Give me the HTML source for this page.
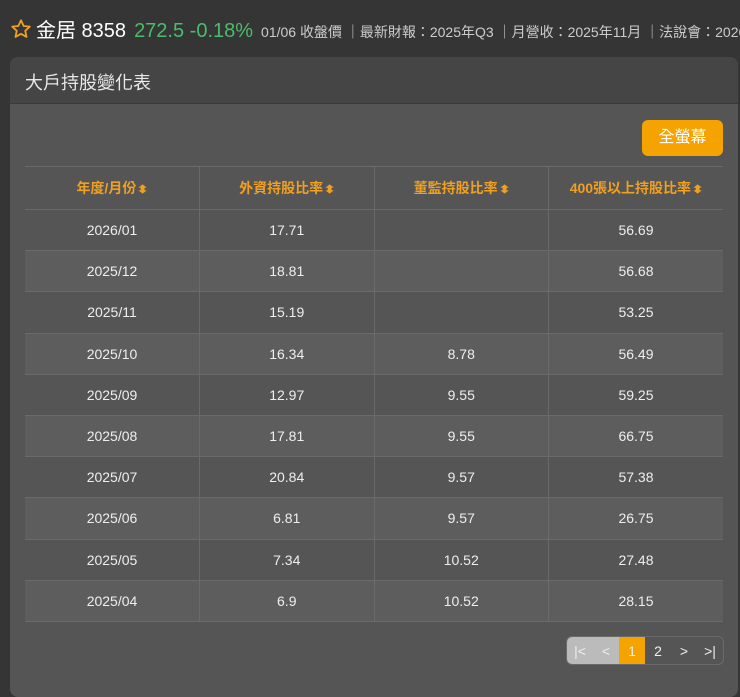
<!DOCTYPE html>
<html><head><meta charset="utf-8"><style>
*{margin:0;padding:0;box-sizing:border-box}
body{width:740px;height:672px;background:#353535;font-family:"Liberation Sans","Noto Sans CJK TC",sans-serif;overflow:hidden;position:relative;color:#eee}
.top{position:absolute;left:10px;top:14px;white-space:nowrap;display:flex;align-items:baseline}
.card{position:absolute;left:10px;top:57px;width:728px;height:640px;border-radius:8px;background:#555;overflow:hidden}
.ch{height:47px;background:#454545;border-bottom:1px solid #3a3a3a;padding:12px 15px;font-size:18px;color:#e8e8e8}
.btn{position:absolute;left:632px;top:63px;width:81px;height:36px;background:#f5a300;border-radius:6px;color:#fff;font-size:16px;text-align:center;line-height:36px}
table{position:absolute;left:15px;top:109px;width:698px;border-collapse:collapse;table-layout:fixed}
td,th{border:1px solid #6a6a6a;text-align:center;font-size:14px;height:41.2px}
tr td:first-child,tr th:first-child{border-left:none}
tr td:last-child,tr th:last-child{border-right:none}
th{height:43px;color:#f0a020;font-weight:bold;font-size:14px}
td{color:#eee}
tr:nth-child(odd) td{background:#5d5d5d}
.s{font-size:11px;margin-left:2px;display:inline-block;transform:scaleX(1.3)}
.pg{position:absolute;left:556px;top:579px;height:29px;display:flex;border:1px solid #6a6a6a;border-radius:6px;overflow:hidden;font-size:14px}
.pg div{width:26px;text-align:center;line-height:28px;color:#eee}
</style></head><body>
<div class="top"><svg width="22" height="22" viewBox="0 0 24 24" style="align-self:center;margin-right:4px"><path d="M12 2.5l2.9 6.2 6.7.7-5 4.6 1.4 6.7L12 17.3 6 20.7l1.4-6.7-5-4.6 6.7-.7z" fill="none" stroke="#f0a020" stroke-width="2" stroke-linejoin="round"/></svg><span style="font-size:20px;color:#fff">金居 8358</span><span style="font-size:20px;color:#4cbb6c;margin-left:8px">272.5 -0.18%</span><span style="font-size:14px;color:#ccc;margin-left:8px">01/06 收盤價 ｜最新財報：2025年Q3 ｜月營收：2025年11月 ｜法說會：2026</span></div>
<div class="card"><div class="ch">大戶持股變化表</div>
<div class="btn">全螢幕</div>
<table>
<tr><th>年度/月份<span class="s">⬍</span></th><th>外資持股比率<span class="s">⬍</span></th><th>董監持股比率<span class="s">⬍</span></th><th>400張以上持股比率<span class="s">⬍</span></th></tr>
<tr><td>2026/01</td><td>17.71</td><td></td><td>56.69</td></tr>
<tr><td>2025/12</td><td>18.81</td><td></td><td>56.68</td></tr>
<tr><td>2025/11</td><td>15.19</td><td></td><td>53.25</td></tr>
<tr><td>2025/10</td><td>16.34</td><td>8.78</td><td>56.49</td></tr>
<tr><td>2025/09</td><td>12.97</td><td>9.55</td><td>59.25</td></tr>
<tr><td>2025/08</td><td>17.81</td><td>9.55</td><td>66.75</td></tr>
<tr><td>2025/07</td><td>20.84</td><td>9.57</td><td>57.38</td></tr>
<tr><td>2025/06</td><td>6.81</td><td>9.57</td><td>26.75</td></tr>
<tr><td>2025/05</td><td>7.34</td><td>10.52</td><td>27.48</td></tr>
<tr><td>2025/04</td><td>6.9</td><td>10.52</td><td>28.15</td></tr>
</table>
<div class="pg"><div style="background:#bbb;color:#eee">|&lt;</div><div style="background:#bbb;color:#eee">&lt;</div><div style="background:#f5a300">1</div><div>2</div><div>&gt;</div><div>&gt;|</div></div>
</div>
</body></html>
